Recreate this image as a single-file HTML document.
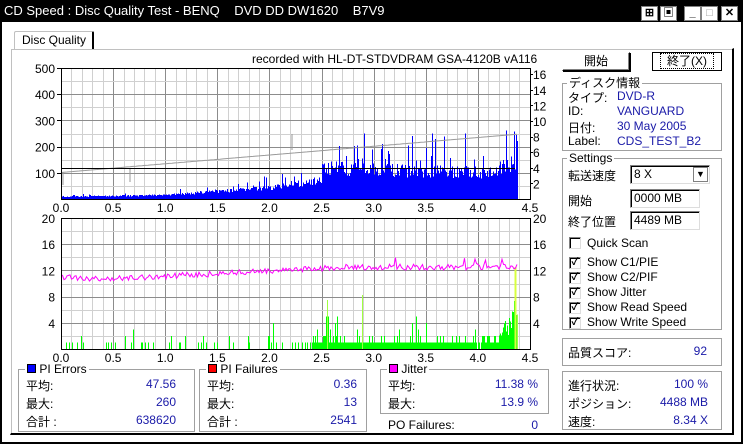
<!DOCTYPE html>
<html><head><meta charset="utf-8">
<style>
*{margin:0;padding:0;box-sizing:border-box}
body{width:743px;height:444px;background:#fff;font-family:"Liberation Sans","Noto Sans CJK JP",sans-serif;font-size:12px;color:#000;position:relative;overflow:hidden}
.a{position:absolute;white-space:nowrap}
.title{left:0;top:0;width:743px;height:22px;background:#000;color:#fff;font-size:13px;line-height:22px;padding-left:4px}
.grp{position:absolute;border:1px solid #a0a0a0;box-shadow:1px 1px 0 #fff inset}
.lg{position:absolute;background:#fff;padding:0 2px;top:-8px;left:6px;line-height:14px}
.blue{color:#1a1aa8}
.btn{position:absolute;border:1px solid #000;border-top-color:#fff;border-left-color:#fff;box-shadow:1px 1px 0 #000, inset -1px -1px 0 #808080;text-align:center;line-height:17px;background:#fff}
.inp{position:absolute;border:1px solid #808080;border-right-color:#ddd;border-bottom-color:#ddd;box-shadow:inset 1px 1px 0 #000;height:19px;line-height:17px;padding-left:3px}
.cb{position:absolute;width:12px;height:12px;border:1px solid #808080;border-right-color:#ddd;border-bottom-color:#ddd;box-shadow:inset 1px 1px 0 #000;font-size:10px;line-height:10px;text-align:center;font-weight:bold}
.r{text-align:right}
.tb{position:absolute;top:6px;width:17px;height:15px;background:#fff;border:1px solid #808080;font-size:11px;line-height:13px;text-align:center;color:#000;font-weight:bold}
</style></head><body>
<div class="a title">CD Speed : Disc Quality Test - BENQ &nbsp;&nbsp; DVD DD DW1620 &nbsp;&nbsp; B7V9</div>
<div class="tb" style="left:641px">⊞</div>
<div class="tb" style="left:660px">▣</div>
<div class="tb" style="left:684px">_</div>
<div class="tb" style="left:701px;color:#999">□</div>
<div class="tb" style="left:721px">✕</div>
<div class="a" style="left:0;top:22px;width:2px;height:422px;background:#000"></div>
<div class="a" style="left:741px;top:22px;width:2px;height:422px;background:#000"></div>
<div class="a" style="left:0;top:442px;width:743px;height:2px;background:#000"></div>
<div class="a" style="left:10px;top:48px;width:724px;height:387px;border:1px solid #fff;border-right:2px solid #000;border-bottom:2px solid #000;box-shadow:inset 1px 1px 0 #c0c0c0"></div>
<div class="a" style="left:14px;top:31px;width:80px;height:18px;border:1px solid #c0c0c0;border-bottom:none;border-right:2px solid #000;border-radius:2px 2px 0 0;background:#fff;padding-left:7px;line-height:17px">Disc Quality</div>
<div class="a" style="left:252px;top:52px">recorded with HL-DT-STDVDRAM GSA-4120B vA116</div>

<svg class="a" style="left:0;top:55px" width="560" height="310" viewBox="0 55 560 310" id="sv"></svg>

<div class="btn" style="left:562px;top:52px;width:68px;height:19px">開始</div>
<div class="btn" style="left:652px;top:52px;width:70px;height:19px;border:1px solid #000;box-shadow:none"><span style="border:1px dotted #000;padding:0 6px">終了(X)</span></div>
<div class="grp" style="left:562px;top:83px;width:160px;height:68px"><span class="lg" style="left:4px">ディスク情報</span></div>
<div class="a" style="left:568px;top:89px">タイプ:</div><div class="a blue" style="left:617px;top:89px">DVD-R</div>
<div class="a" style="left:568px;top:104px">ID:</div><div class="a blue" style="left:617px;top:104px">VANGUARD</div>
<div class="a" style="left:568px;top:119px">日付:</div><div class="a blue" style="left:617px;top:119px">30 May 2005</div>
<div class="a" style="left:568px;top:134px">Label:</div><div class="a blue" style="left:617px;top:134px">CDS_TEST_B2</div>
<div class="grp" style="left:562px;top:158px;width:160px;height:172px"><span class="lg" style="left:4px">Settings</span></div>
<div class="a" style="left:568px;top:167px">転送速度</div>
<div class="inp" style="left:630px;top:165px;width:80px">8 X<span style="position:absolute;right:1px;top:1px;width:15px;height:15px;border:1px solid #808080;font-size:9px;line-height:13px;text-align:center">▼</span></div>
<div class="a" style="left:568px;top:192px">開始</div>
<div class="inp" style="left:630px;top:189px;width:70px">0000 MB</div>
<div class="a" style="left:568px;top:213px">終了位置</div>
<div class="inp" style="left:630px;top:211px;width:70px">4489 MB</div>
<div class="cb" style="left:569px;top:237px"></div><div class="a" style="left:587px;top:236px">Quick Scan</div>
<div class="cb" style="left:569px;top:257px">✓</div><div class="a" style="left:587px;top:255px">Show C1/PIE</div>
<div class="cb" style="left:569px;top:272px">✓</div><div class="a" style="left:587px;top:270px">Show C2/PIF</div>
<div class="cb" style="left:569px;top:287px">✓</div><div class="a" style="left:587px;top:285px">Show Jitter</div>
<div class="cb" style="left:569px;top:302px">✓</div><div class="a" style="left:587px;top:300px">Show Read Speed</div>
<div class="cb" style="left:569px;top:317px">✓</div><div class="a" style="left:587px;top:315px">Show Write Speed</div>
<div class="grp" style="left:562px;top:338px;width:160px;height:28px"></div>
<div class="a" style="left:568px;top:344px">品質スコア:</div><div class="a blue r" style="left:660px;top:344px;width:47px">92</div>
<div class="grp" style="left:562px;top:371px;width:160px;height:59px"></div>
<div class="a" style="left:568px;top:377px">進行状況:</div><div class="a blue r" style="left:640px;top:377px;width:68px">100 %</div>
<div class="a" style="left:568px;top:395px">ポジション:</div><div class="a blue r" style="left:640px;top:395px;width:68px">4488 MB</div>
<div class="a" style="left:568px;top:413px">速度:</div><div class="a blue r" style="left:640px;top:413px;width:68px">8.34 X</div>

<div class="grp" style="left:18px;top:369px;width:177px;height:63px"><span class="lg"><span style="display:inline-block;width:9px;height:9px;background:#0000ff;border:1px solid #000"></span> PI Errors</span></div>
<div class="a" style="left:26px;top:377px">平均:</div><div class="a blue r" style="left:100px;top:377px;width:76px">47.56</div>
<div class="a" style="left:26px;top:395px">最大:</div><div class="a blue r" style="left:100px;top:395px;width:76px">260</div>
<div class="a" style="left:26px;top:413px">合計 :</div><div class="a blue r" style="left:100px;top:413px;width:76px">638620</div>
<div class="grp" style="left:199px;top:369px;width:168px;height:63px"><span class="lg"><span style="display:inline-block;width:9px;height:9px;background:#ff0000;border:1px solid #000"></span> PI Failures</span></div>
<div class="a" style="left:207px;top:377px">平均:</div><div class="a blue r" style="left:280px;top:377px;width:77px">0.36</div>
<div class="a" style="left:207px;top:395px">最大:</div><div class="a blue r" style="left:280px;top:395px;width:77px">13</div>
<div class="a" style="left:207px;top:413px">合計 :</div><div class="a blue r" style="left:280px;top:413px;width:77px">2541</div>
<div class="grp" style="left:380px;top:369px;width:169px;height:45px"><span class="lg"><span style="display:inline-block;width:9px;height:9px;background:#ff00ff;border:1px solid #000"></span> Jitter</span></div>
<div class="a" style="left:388px;top:377px">平均:</div><div class="a blue r" style="left:460px;top:377px;width:78px">11.38 %</div>
<div class="a" style="left:388px;top:395px">最大:</div><div class="a blue r" style="left:460px;top:395px;width:78px">13.9 %</div>
<div class="a" style="left:388px;top:418px">PO Failures:</div><div class="a blue r" style="left:480px;top:418px;width:58px">0</div>

<script>
(function(){
var s=123456789;function R(){s^=s<<13;s^=s>>>17;s^=s<<5;return ((s>>>0)%100000)/100000;}
var L=61,Rt=530,px=52.11*2;
var o=[];
function line(x1,y1,x2,y2,c,w){o.push('<line x1="'+x1+'" y1="'+y1+'" x2="'+x2+'" y2="'+y2+'" stroke="'+c+'" stroke-width="'+(w||1)+'" shape-rendering="crispEdges"/>');}
function txt(x,y,t,a){o.push('<text x="'+x+'" y="'+y+'" font-size="12" font-family="Liberation Sans,sans-serif" text-anchor="'+(a||'start')+'">'+t+'</text>');}
function grid(top,bot,nh){
  for(var i=1;i<=45;i++){var x=Math.round(L+i*10.42)+.5;if(x>Rt)break;line(x,top,x,bot,i%5==0?'#8c8c8c':'#d0d0d0');}
  for(var j=1;j<nh;j++){var y=Math.round(top+(bot-top)*j/nh)+.5;line(L,y,Rt,y,j%2==0?'#8c8c8c':'#d0d0d0');}
}
var T1=68,B1=199;grid(T1,B1,10);
var d='';
for(var x=L+1;x<=517;x++){var p=(x-L)/px,b;
 if(p<1)b=9+p*7;else if(p<2)b=16+(p-1)*28;else if(p<2.5)b=44+(p-2)*70;else b=125-(p-2.5)*12+(p>4.1?(p-4.1)*180:0);
 var v=b*(0.72+0.45*R());if(R()<0.12)v+=b*R()*0.9;if(p>2.5&&R()<0.05)v=170+R()*90;if(v>262)v=262;
 d+='M'+(x+.5)+' '+B1+'V'+(B1-v*131/500).toFixed(1);}
o.push('<path d="'+d+'" stroke="#0000ff" stroke-width="1" shape-rendering="crispEdges"/>');
var pts=[];for(var x=L;x<=517;x+=3){var p=(x-L)/px;var v=3.4+p*1.12;pts.push(x+','+(B1-v*7.8).toFixed(1));}
o.push('<polyline points="'+pts.join(' ')+'" fill="none" stroke="#999" stroke-width="1"/>');
line(L+2,172,L+2,185,'#999');line(130,168,130,182,'#999');line(292,134,292,150,'#999');
line(L,168.5,515,168.5,'#000');
var T2=218,B2=349;grid(T2,B2,10);
var g='',gy='';
for(var x=L+1;x<=517;x++){var p=(x-L)/px,v=0;var pr=p<2.4?0.2:0.97;
 if(R()<pr){v=1;var r=R();if(r<0.3)v=2;if(r<0.08)v=3+Math.floor(R()*3);}
 if(p>2.4&&R()<0.015)v=6+R()*4;
 if(p>4.2)v=Math.max(v,(p-4.2)*40*R()+2);
 if(v>0){var y=(B2-v*6.55).toFixed(1);if(v>5&&R()<0.5)gy+='M'+(x+.5)+' '+B2+'V'+y;else g+='M'+(x+.5)+' '+B2+'V'+y;}}
o.push('<path d="'+g+'" stroke="#00ff00" stroke-width="1" shape-rendering="crispEdges"/>');
o.push('<path d="'+gy+'" stroke="#a0ff40" stroke-width="1" shape-rendering="crispEdges"/>');
line(515.5,B2,515.5,B2-12.5*6.55,'#d8ff40',2);
var jp=[];for(var x=L;x<=517;x+=1.5){var p=(x-L)/px;var m=p<0.5?10.9-p*0.4:(p<2.7?10.7+(p-0.5)*0.82:12.5);var v=m+(R()-0.5)*0.9;if(p>3.2&&R()<0.05)v+=1;jp.push(x.toFixed(1)+','+(B2-v*6.55).toFixed(1));}
o.push('<polyline points="'+jp.join(' ')+'" fill="none" stroke="#ff00ff" stroke-width="1"/>');
o.push('<rect x="'+(L+.5)+'" y="'+(T1+.5)+'" width="'+(Rt-L)+'" height="'+(B1-T1)+'" fill="none" stroke="#000"/>');
o.push('<rect x="'+(L+.5)+'" y="'+(T2+.5)+'" width="'+(Rt-L)+'" height="'+(B2-T2)+'" fill="none" stroke="#000"/>');
for(var k=1;k<=5;k++){var y=B1-k*26.2;txt(55,y+5,k*100,'end');line(57,Math.round(y)+.5,L,Math.round(y)+.5,'#000');}
for(var k=1;k<=8;k++){var y=B1-k*2*7.8;txt(533,y+5,k*2);line(Rt,Math.round(y)+.5,Rt+3,Math.round(y)+.5,'#000');}
for(var k=0;k<=5;k++){var y=B2-k*4*6.55;if(k>0){txt(55,y+5,k*4,'end');txt(533,y+5,k*4);}}
for(var k=0;k<=9;k++){var x=L+k*52.11,t=(k*0.5).toFixed(1);txt(x,B1+13,t,'middle');txt(x,B2+13,t,'middle');}
document.getElementById('sv').innerHTML=o.join('');
})();
</script>
</body></html>
